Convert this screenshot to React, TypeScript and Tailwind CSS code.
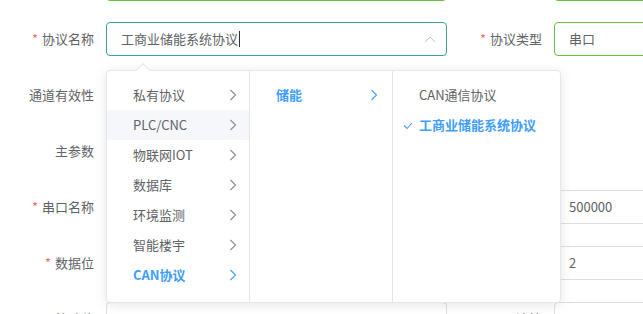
import React from 'react';

const font = { fontFamily: '"Noto Sans CJK SC", "Noto Sans", sans-serif' };

function Chevron({ active }: { active?: boolean }) {
  return (
    <svg width='8' height='12' viewBox='0 0 8 12' className='shrink-0'>
      <polyline
        points='1.5,1 6.5,6 1.5,11'
        fill='none'
        stroke={active ? '#409eff' : '#8a8d93'}
        strokeWidth='1.1'
      />
    </svg>
  );
}

function Label({ text, required, w }: { text?: string; required?: boolean; w: string }) {
  return (
    <div className={`${w} shrink-0 pr-3 text-right text-[13px] leading-[34px] text-[#606266]`}>
      {required && <span className='mr-1 text-[#f56c6c]'>*</span>}
      {text}
    </div>
  );
}

const groups = ['私有协议', 'PLC/CNC', '物联网IOT', '数据库', '环境监测', '智能楼宇', 'CAN协议'];

function Dropdown() {
  return (
    <div className='absolute left-[106px] top-[70px] h-[233px] rounded-[4px] border border-[#e4e7ed] bg-white shadow-[0_2px_12px_0_rgba(0,0,0,0.1)]'>
      {/* popper arrow */}
      <div className='absolute -top-[6px] left-[31px] h-[10px] w-[10px] rotate-45 border-l border-t border-[#e4e7ed] bg-white' />
      <div className='relative flex h-full'>
        <ul className='w-[143px] border-r border-[#e4e7ed] pt-[9px]'>
          {groups.map((g, i) => {
            const active = g === 'CAN协议';
            return (
              <li
                key={g}
                className={`flex h-[30px] items-center justify-between pl-[26px] pr-[12px] text-[13px] ${
                  i === 1 ? 'bg-[#f5f7fa]' : ''
                } ${active ? 'font-bold text-[#409eff]' : 'text-[#606266]'}`}
              >
                <span>{g}</span>
                <Chevron active={active} />
              </li>
            );
          })}
        </ul>
        <ul className='w-[143px] border-r border-[#e4e7ed] pt-[9px]'>
          <li className='flex h-[30px] items-center justify-between pl-[26px] pr-[14px] text-[13px] font-bold text-[#409eff]'>
            <span>储能</span>
            <Chevron active />
          </li>
        </ul>
        <ul className='w-[167px] pt-[9px]'>
          <li className='flex h-[30px] items-center pl-[26px] text-[13px] text-[#606266]'>CAN通信协议</li>
          <li className='relative flex h-[30px] items-center pl-[26px] text-[13px] font-bold text-[#409eff]'>
            <svg width='10' height='8' viewBox='0 0 10 8' className='absolute left-[10px] top-[12px]'>
              <polyline points='1,3.5 4,6.5 9,1' fill='none' stroke='#409eff' strokeWidth='1.1' />
            </svg>
            工商业储能系统协议
          </li>
        </ul>
      </div>
    </div>
  );
}

export default function App() {
  return (
    <div className='relative h-[314px] w-[643px] overflow-hidden bg-white' style={font}>
      <div className='flex flex-col'>
        {/* row 0 - scrolled above the top edge */}
        <div className='-mt-[33px] flex h-[34px]'>
          <Label w='w-[106px]' />
          <div className='h-[34px] w-[341px] shrink-0 rounded-[4px] border border-[#67c23a]' />
          <Label w='w-[107px]' />
          <div className='h-[34px] w-[200px] shrink-0 rounded-[4px] border border-[#67c23a]' />
        </div>

        {/* row 1 */}
        <div className='mt-[21px] flex h-[34px]'>
          <Label text='协议名称' required w='w-[106px]' />
          <div className='flex h-[34px] w-[341px] shrink-0 items-center justify-between rounded-[4px] border border-[#36a59c] pl-[14px] pr-[10px]'>
            <div className='flex items-center text-[13px] text-[#606266]'>
              工商业储能系统协议
              <span className='ml-[1px] inline-block h-[16px] w-[1px] bg-[#303133]' />
            </div>
            <svg width='12' height='8' viewBox='0 0 12 8'>
              <polyline points='1,7 6,2 11,7' fill='none' stroke='#c0c4cc' strokeWidth='1' />
            </svg>
          </div>
          <Label text='协议类型' required w='w-[107px]' />
          <div className='flex h-[34px] w-[200px] shrink-0 items-center rounded-[4px] border border-[#67c23a] pl-[14px] text-[13px] text-[#606266]'>
            串口
          </div>
        </div>

        {/* row 2 */}
        <div className='mt-[22px] flex h-[34px]'>
          <Label text='通道有效性' w='w-[106px]' />
        </div>

        {/* row 3 */}
        <div className='mt-[22px] flex h-[34px]'>
          <Label text='主参数' w='w-[106px]' />
        </div>

        {/* row 4 */}
        <div className='mt-[22px] flex h-[34px]'>
          <Label text='串口名称' required w='w-[106px]' />
          <div className='h-[34px] w-[341px] shrink-0 rounded-[4px] border border-[#dcdfe6]' />
          <Label text='波特率' required w='w-[107px]' />
          <div className='flex h-[34px] w-[200px] shrink-0 items-center rounded-[4px] border border-[#dcdfe6] pl-[14px] text-[13px] text-[#606266]'>
            500000
          </div>
        </div>

        {/* row 5 */}
        <div className='mt-[22px] flex h-[34px]'>
          <Label text='数据位' required w='w-[106px]' />
          <div className='h-[34px] w-[341px] shrink-0 rounded-[4px] border border-[#dcdfe6]' />
          <Label text='停止位' required w='w-[107px]' />
          <div className='flex h-[34px] w-[200px] shrink-0 items-center rounded-[4px] border border-[#dcdfe6] pl-[14px] text-[13px] text-[#606266]'>
            2
          </div>
        </div>

        {/* row 6 - partly below the bottom edge */}
        <div className='mt-[22px] flex h-[34px]'>
          <Label text='校验位' w='w-[106px]' />
          <div className='h-[34px] w-[341px] shrink-0 rounded-[4px] border border-[#dcdfe6]' />
          <Label text='流控' w='w-[107px]' />
          <div className='h-[34px] w-[200px] shrink-0 rounded-[4px] border border-[#dcdfe6]' />
        </div>
      </div>

      <Dropdown />
    </div>
  );
}
